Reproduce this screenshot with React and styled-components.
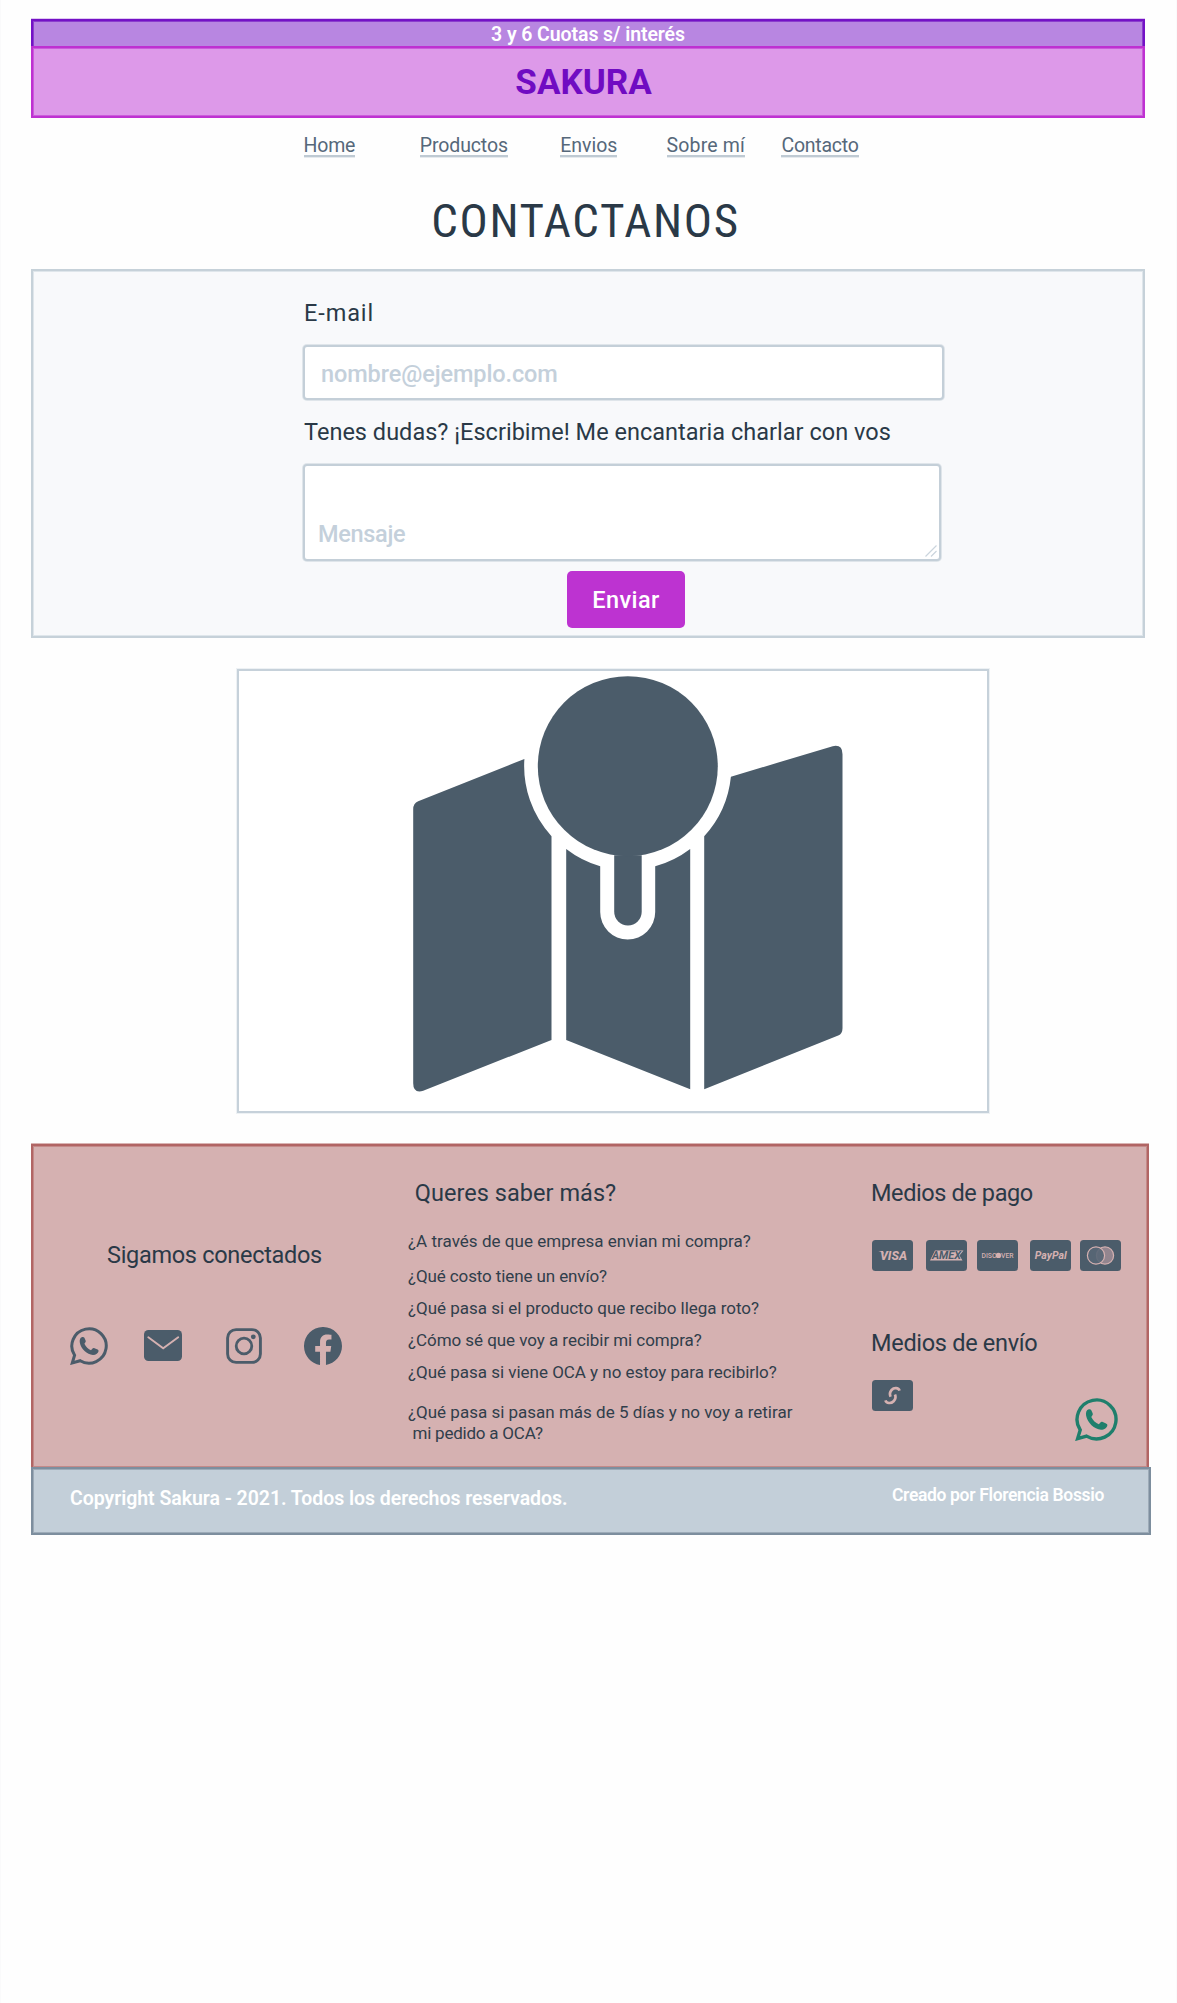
import React from 'react';
import styled, { createGlobalStyle } from 'styled-components';
import { BsFacebook } from 'react-icons/bs';

const slate = '#4b5c6a';
const ink = '#2a3947';
const rose = '#d5b1b1';

const GlobalStyle = createGlobalStyle`
  * { box-sizing: border-box; }
  body { margin: 0; background: #fefefe; font-family: Roboto, "Liberation Sans", sans-serif; color: ${ink}; }
  h1, h2, p, ul { margin: 0; padding: 0; font-weight: 400; }
`;

const Page = styled.div`
  width: 1177px;
  height: 2003px;
  padding: 19px 0 0 30px;
  border-left: 1px solid #fafafb;
  border-right: 1px solid #fafafb;
  display: flex;
  flex-direction: column;
  align-items: flex-start;
`;

const Bar = styled.div`
  width: 1114px;
  display: flex;
  justify-content: center;
`;

const Promo = styled(Bar)`
  height: 27px;
  border: 2px solid #7411c6;
  border-bottom: 0;
  background: #b886e1;
  box-shadow: inset 1px 1px #8b3ecd, inset -1px 0 #8b3ecd, 0 -1px #e0c8f2;
  color: #fff;
  font-size: 19.5px;
  line-height: 27px;
  font-weight: 600;
  letter-spacing: -0.08px;
`;

const Brand = styled(Bar)`
  height: 72px;
  padding-right: 9px;
  border: 2px solid #be31d1;
  background: #dd99e9;
  box-shadow: inset 0 0 0 1px #cb5bdb;
  color: #700bc2;
  font-size: 35px;
  line-height: 70px;
  font-weight: 700;
`;

const Nav = styled.nav`
  height: 40px;
  padding-top: 17px;
  margin-left: 272.5px;
  display: grid;
  grid-template-columns: 116.3px 140.4px 106.4px 114.9px auto;
`;

const NavLink = styled.a`
  justify-self: start;
  height: 22px;
  border-bottom: 2px solid #bfcad3;
  box-shadow: 0 1px #e6eaee;
  color: #56687a;
  font-size: 19.5px;
  line-height: 21px;
  letter-spacing: ${(p) => p.$spacing}px;
`;

const Title = styled.h1`
  width: 1109px;
  margin: 34px 0 20px;
  text-align: center;
  font-size: 47px;
  line-height: 57px;
  font-stretch: 75%;
  letter-spacing: 1.65px;
`;

const FormPanel = styled.form`
  width: 1114px;
  height: 369px;
  padding: 28px 0 0 270px;
  display: flex;
  flex-direction: column;
  align-items: flex-start;
  border: 2px solid #c6d1d9;
  background: #f8f9fb;
  box-shadow: inset 0 0 0 1px #dfe6eb;
`;

const Label = styled.label`
  margin-left: 1px;
  font-size: 23.5px;
  line-height: 28px;
  letter-spacing: ${(p) => p.$spacing}px;
`;

const fieldLook = `
  display: block;
  margin: 0;
  border: 2px solid #c4cfd8;
  border-radius: 4px;
  background: #fff;
  box-shadow: 0 0 0 1px #dfe5ea;
  font: 500 23.5px/28px Roboto, "Liberation Sans", sans-serif;
  letter-spacing: -0.1px;
  outline: none;
  &::placeholder { color: #c4d0db; opacity: 1; }
`;

const EmailInput = styled.input`
  ${fieldLook}
  width: 641px;
  height: 55px;
  margin: 18px 0;
  padding: 2px 16px 0;
`;

const MessageBox = styled.div`
  position: relative;
  margin: 18px 0 10px;
`;

const MessageInput = styled.textarea`
  ${fieldLook}
  letter-spacing: -0.3px;
  width: 638px;
  height: 97px;
  padding: 54px 13px 0;
  resize: none;
  overflow: hidden;
`;

const Grip = styled.svg`
  position: absolute;
  right: 4px;
  bottom: 4px;
`;

const SendButton = styled.button`
  width: 118px;
  height: 57px;
  margin-left: 264px;
  padding: 0;
  border: 0;
  border-radius: 5px;
  background: #bd33d1;
  color: #fff;
  font: 500 23.5px/59px Roboto, "Liberation Sans", sans-serif;
  letter-spacing: 0.45px;
`;

const MapFrame = styled.div`
  width: 752px;
  height: 444px;
  margin: 31px 0 31px 206px;
  border: 2px solid #c6d1da;
  background: #fff;
  box-shadow: 0 0 0 1px #edf1f4;
  svg { display: block; }
`;

const Footer = styled.footer`
  position: relative;
  width: 1118px;
  height: 323px;
  display: grid;
  grid-template-columns: 375px 463px 1fr;
  border: 2px solid #b16564;
  border-bottom: 0;
  background: ${rose};
  box-shadow: inset 0 0 0 1px #c48a89, 0 -1px #d9b4b3;
`;

const Column = styled.section`
  padding-top: ${(p) => p.$top}px;
`;

const Heading = styled.h2`
  margin-left: ${(p) => p.$indent || 0}px;
  margin-top: ${(p) => p.$gap || 0}px;
  font-size: 23.5px;
  line-height: 28px;
  letter-spacing: ${(p) => p.$spacing}px;
  white-space: nowrap;
`;

const Social = styled.div`
  height: 38px;
  margin: 57.5px 0 0 37px;
  display: flex;
  align-items: center;
  svg { display: block; flex: none; }
  svg:nth-child(2) { margin-left: 36.3px; }
  svg:nth-child(3) { margin-left: 44px; }
  svg:nth-child(4) { margin-left: 41.3px; }
`;

const Questions = styled.ul`
  list-style: none;
  margin-top: 23.5px;
`;

const Question = styled.li`
  margin-bottom: ${(p) => p.$after}px;
  font-size: 17px;
  line-height: 21px;
  letter-spacing: ${(p) => p.$spacing}px;
  color: #303e4b;
`;

const Continuation = styled.span`
  display: block;
  padding-left: 4.5px;
  letter-spacing: -0.22px;
`;

const Cards = styled.div`
  height: 31px;
  margin: ${(p) => p.$gap}px 0 0 0.5px;
  display: flex;
  svg { display: block; flex: none; }
  svg:nth-child(2) { margin-left: 13px; }
  svg:nth-child(3) { margin-left: 10.5px; }
  svg:nth-child(4) { margin-left: 11.5px; }
  svg:nth-child(5) { margin-left: 9px; }
`;

const Floating = styled.a`
  position: absolute;
  right: 29px;
  bottom: 26px;
  svg { display: block; }
`;

const Legal = styled.div`
  width: 1120px;
  height: 68px;
  padding-left: 37px;
  display: flex;
  align-items: flex-start;
  justify-content: space-between;
  border: 2px solid #7d8e9e;
  background: #c3cfd9;
  box-shadow: inset 0 0 0 1px #9dabb8;
  color: #fff;
`;

const Copyright = styled.p`
  && { font-weight: 600; }
  padding-top: 18px;
  font-size: 19.5px;
  line-height: 24px;
  letter-spacing: -0.04px;
`;

const Credit = styled.p`
  && { font-weight: 600; }
  padding: 15px 45px 0 0;
  font-size: 17.5px;
  line-height: 22px;
  letter-spacing: -0.34px;
`;

const WhatsApp = ({ size, color }) => (
  <svg width={size} height={size} viewBox="0 0 38 38">
    <path d="M2.3 35.9 4.6 28.3A17.2 17.2 0 1 1 10.2 33.7Z" fill="none" stroke={color} strokeWidth="3" />
    <path
      d="M12.2 10C10 10.6 9.4 13 9.8 15.5 11 22 17 27.6 23 28c3 0 5.3-1.7 5.6-4 0-.8-.6-1.2-1.6-1.7l-2.5-1.1c-1-.4-1.5-.2-2.2.6L21 23.2c-2.5-.9-5.4-3.7-6.6-6.4l1-1.5c.5-.8.4-1.3.1-2.1l-1.1-2.4c-.4-.8-1.2-1-2.2-.8Z"
      fill={color}
    />
  </svg>
);

const Mail = () => (
  <svg width="38" height="31" viewBox="0 0 38 31">
    <rect width="38" height="31" rx="4.5" fill={slate} />
    <path d="m4.3 7.2 14.9 11 15-11" fill="none" stroke={rose} strokeWidth="1.9" strokeLinecap="round" />
  </svg>
);

const Instagram = () => (
  <svg width="36" height="36" viewBox="0 0 36 36">
    <rect x="1.6" y="1.6" width="32.8" height="32.8" rx="8.5" fill="none" stroke={slate} strokeWidth="2.9" />
    <circle cx="18" cy="18" r="7.8" fill="none" stroke={slate} strokeWidth="2.8" />
    <circle cx="27.3" cy="8.8" r="2.4" fill={slate} />
  </svg>
);

const Card = ({ children }) => (
  <svg width="41" height="31" viewBox="0 0 41 31" fontFamily="Roboto, sans-serif" textAnchor="middle">
    <rect width="41" height="31" rx="3.5" fill={slate} />
    {children}
  </svg>
);

const MapDrawing = () => (
  <svg width="748" height="440" viewBox="238.8 670.8 748 440" fill={slate}>
    <path d="M524.2 758.7A103.5 103.5 0 0 0 551.3 836V1039.7L423 1090.6Q413 1093.5 413 1083V809Q413 803 418 801Z" />
    <path d="M566 848.7A103.5 103.5 0 0 0 600 866V911.8A27.5 27.5 0 0 0 655 911.8V866A103.5 103.5 0 0 0 690 848.7V1089L566 1039.7Z" />
    <path d="M730.7 776.5 832.5 746Q842.3 744 842.3 754V1028Q842.3 1033.5 838 1035.3L704 1089V836A103.5 103.5 0 0 0 730.7 776.5Z" />
    <path d="M614 855H641.5V911.6A13.75 13.75 0 0 1 614 911.6Z" />
    <circle cx="627.6" cy="766" r="90" />
  </svg>
);

const links = [
  { name: 'Home', spacing: -0.2 },
  { name: 'Productos', spacing: -0.12 },
  { name: 'Envios', spacing: 0 },
  { name: 'Sobre mí', spacing: 0.15 },
  { name: 'Contacto', spacing: -0.24 },
];

const questions = [
  { text: '¿A través de que empresa envian mi compra?', after: 14, spacing: 0.03 },
  { text: '¿Qué costo tiene un envío?', after: 11.4, spacing: -0.11 },
  { text: '¿Qué pasa si el producto que recibo llega roto?', after: 11.6, spacing: -0.02 },
  { text: '¿Cómo sé que voy a recibir mi compra?', after: 11, spacing: -0.05 },
  { text: '¿Qué pasa si viene OCA y no estoy para recibirlo?', after: 18.5, spacing: -0.02 },
  { text: '¿Qué pasa si pasan más de 5 días y no voy a retirar', rest: 'mi pedido a OCA?', after: 0, spacing: 0 },
];

export default function App() {
  return (
    <>
      <GlobalStyle />
      <Page>
        <Promo>3 y 6 Cuotas s/ interés</Promo>
        <Brand>SAKURA</Brand>
        <Nav>
          {links.map((l) => <NavLink key={l.name} $spacing={l.spacing}>{l.name}</NavLink>)}
        </Nav>
        <Title>CONTACTANOS</Title>

        <FormPanel>
          <Label $spacing={0.9}>E-mail</Label>
          <EmailInput placeholder="nombre@ejemplo.com" />
          <Label $spacing={0.02}>Tenes dudas? ¡Escribime! Me encantaria charlar con vos</Label>
          <MessageBox>
            <MessageInput placeholder="Mensaje" />
            <Grip width="12" height="12" viewBox="0 0 12 12" stroke="#cbd5dd" strokeWidth="1.2">
              <path d="M.5 11.5 11.5.5M6 11.5 11.5 6" />
            </Grip>
          </MessageBox>
          <SendButton type="button">Enviar</SendButton>
        </FormPanel>

        <MapFrame>
          <MapDrawing />
        </MapFrame>

        <Footer>
          <Column $top={95}>
            <Heading $indent={74} $spacing={-0.3}>Sigamos conectados</Heading>
            <Social>
              <WhatsApp size={38} color={slate} />
              <Mail />
              <Instagram />
              <BsFacebook size={38} color={slate} />
            </Social>
          </Column>

          <Column $top={33}>
            <Heading $indent={6.7} $spacing={0.05}>Queres saber más?</Heading>
            <Questions>
              {questions.map((q) => (
                <Question key={q.text} $after={q.after} $spacing={q.spacing}>
                  {q.text}
                  {q.rest && <Continuation>{q.rest}</Continuation>}
                </Question>
              ))}
            </Questions>
          </Column>

          <Column $top={33}>
            <Heading $spacing={-0.4}>Medios de pago</Heading>
            <Cards $gap={33}>
              <Card>
                <text x="21.5" y="20" fontSize="12.5" fontWeight="800" fontStyle="italic" fill={rose} textLength="27" lengthAdjust="spacingAndGlyphs">VISA</text>
                <path d="M6.3 10.9h4.5l1.5 3Q10 11.500 6.3 10.900Z" fill={rose} />
              </Card>
              <Card>
                <path d="M9 10.5H37.5L33.5 15.5 36.5 20.5H4Z" fill={rose} />
                <text x="20.5" y="19.2" fontSize="10.5" fontWeight="700" fontStyle="italic" fill={slate} textLength="29" lengthAdjust="spacingAndGlyphs">AMEX</text>
              </Card>
              <Card>
                <text x="20.5" y="18.3" fontSize="8" fontWeight="500" fill={rose} textLength="32" lengthAdjust="spacingAndGlyphs">DISCOVER</text>
                <circle cx="21.3" cy="15.4" r="2.6" fill={rose} />
              </Card>
              <Card>
                <text x="20.8" y="18.5" fontSize="10" fontWeight="700" fontStyle="italic" fill={rose} textLength="32" lengthAdjust="spacingAndGlyphs">PayPal</text>
              </Card>
              <Card>
                <circle cx="25" cy="15.5" r="8.6" fill="#93858f" stroke={rose} strokeWidth="1.2" />
                <circle cx="16" cy="15.5" r="8.6" fill="#586676" fillOpacity="0.9" stroke={rose} strokeWidth="1.2" />
              </Card>
            </Cards>
            <Heading $gap={57.5} $spacing={-0.3}>Medios de envío</Heading>
            <Cards $gap={23.5}>
              <Card>
                <path
                  d="M27.6 10.6C26.5 7.6 22 7.4 19.6 10 17.8 12 17.6 14.6 18.6 16.8M13.4 20.4C14.5 23.6 19 23.8 21.6 21.2 23.6 19.2 24 16.8 23 14.4"
                  fill="none" stroke={rose} strokeWidth="2.7"
                />
              </Card>
            </Cards>
          </Column>
          <Floating>
            <WhatsApp size={43} color="#1f7f6c" />
          </Floating>
        </Footer>

        <Legal>
          <Copyright>Copyright Sakura - 2021. Todos los derechos reservados.</Copyright>
          <Credit>Creado por Florencia Bossio</Credit>
        </Legal>
      </Page>
    </>
  );
}
